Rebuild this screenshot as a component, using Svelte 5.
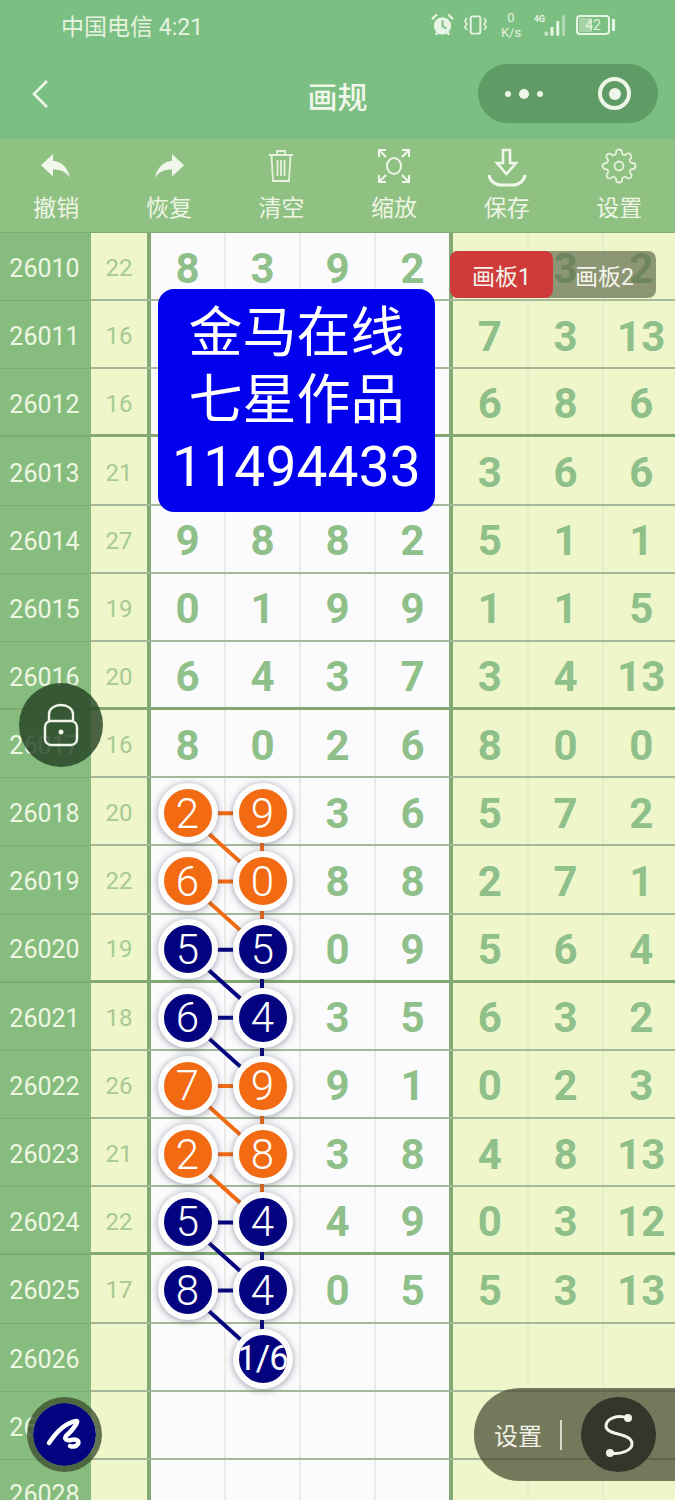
<script lang="ts">
	const ROW_H = 68.17;

	// id, sum, draw columns, right columns
	const rows = [
		["26010", "22", ["8", "3", "9", "2"], ["", "3", "2"]],
		["26011", "16", ["", "", "", ""], ["7", "3", "13"]],
		["26012", "16", ["", "", "", ""], ["6", "8", "6"]],
		["26013", "21", ["", "", "", ""], ["3", "6", "6"]],
		["26014", "27", ["9", "8", "8", "2"], ["5", "1", "1"]],
		["26015", "19", ["0", "1", "9", "9"], ["1", "1", "5"]],
		["26016", "20", ["6", "4", "3", "7"], ["3", "4", "13"]],
		["26017", "16", ["8", "0", "2", "6"], ["8", "0", "0"]],
		["26018", "20", ["2", "9", "3", "6"], ["5", "7", "2"]],
		["26019", "22", ["6", "0", "8", "8"], ["2", "7", "1"]],
		["26020", "19", ["5", "5", "0", "9"], ["5", "6", "4"]],
		["26021", "18", ["6", "4", "3", "5"], ["6", "3", "2"]],
		["26022", "26", ["7", "9", "9", "1"], ["0", "2", "3"]],
		["26023", "21", ["2", "8", "3", "8"], ["4", "8", "13"]],
		["26024", "22", ["5", "4", "4", "9"], ["0", "3", "12"]],
		["26025", "17", ["8", "4", "0", "5"], ["5", "3", "13"]],
		["26026", "", ["", "", "", ""], ["", "", ""]],
		["26027", "", ["", "", "", ""], ["", "", ""]],
		["26028", "", ["", "", "", ""], ["", "", ""]],
	];

	const tools = ["撤销", "恢复", "清空", "缩放", "保存", "设置"];

	const FIRST_BALL = 8;
	const LAST_BALL = 15;
	const ORANGE = "#f26a12";
	const NAVY = "#03037f";
	const LEFT_X = 186;
	const RIGHT_X = 262;

	const ballColors = {
		8: "orange", 9: "orange", 10: "navy", 11: "navy",
		12: "orange", 13: "orange", 14: "navy", 15: "navy",
	};

	function ballClass(r: number, c: number) {
		if (r === 16 && c === 1) return "navy small";
		if (r >= FIRST_BALL && r <= LAST_BALL && c < 2) return ballColors[r];
		return "";
	}

	const segments = [];
	for (let r = FIRST_BALL; r <= LAST_BALL; r++) {
		const y = ROW_H * r + 35;
		const stroke = ballColors[r] === "orange" ? ORANGE : NAVY;
		segments.push({ x1: LEFT_X, y1: y, x2: RIGHT_X, y2: y, stroke });
		segments.push({ x1: LEFT_X, y1: y, x2: RIGHT_X, y2: y + ROW_H, stroke });
		segments.push({ x1: RIGHT_X, y1: y, x2: RIGHT_X, y2: y + ROW_H, stroke });
	}
</script>

<div class="page">
	<header class="top">
		<div class="status">
			<span class="carrier">中国电信 4:21</span>
			<div class="status-icons">
				<svg width="23" height="26" viewBox="0 0 24 26">
					<circle cx="12" cy="14" r="9" fill="#e9f5e4" />
					<path d="M12 8v6l4 3" fill="none" stroke="#7bbf82" stroke-width="2" />
					<path d="M1 7l5-5M23 7l-5-5M5 23l2-2M19 23l-2-2" stroke="#e9f5e4" stroke-width="2.4" />
				</svg>
				<svg width="25" height="24" viewBox="0 0 26 24">
					<rect x="8" y="3" width="10" height="18" rx="2" fill="none" stroke="#e9f5e4" stroke-width="2" />
					<path d="M4 5l-2 3 2 3-2 3 2 3M22 5l2 3-2 3 2 3-2 3" fill="none" stroke="#e9f5e4" stroke-width="1.6" />
				</svg>
				<div class="speed"><span>0</span><span>K/s</span></div>
				<svg width="33" height="26" viewBox="0 0 34 26">
					<text x="0" y="10" class="g4">4G</text>
					<rect x="11" y="20" width="3" height="4" fill="#d8ecd2" />
					<rect x="17" y="15" width="3" height="9" fill="#e9f5e4" />
					<rect x="23" y="9" width="3" height="15" fill="#e9f5e4" />
					<rect x="29" y="3" width="3" height="21" fill="#b4dab4" />
				</svg>
				<div class="battery">
					<div class="battery-box"><span class="level"></span><span class="pct">42</span></div>
					<span class="battery-tip"></span>
				</div>
			</div>
		</div>
		<div class="nav">
			<svg class="back" width="18" height="30" viewBox="0 0 18 30">
				<path d="M16 2L3 15l13 13" fill="none" stroke="#f0f7ea" stroke-width="2.6" />
			</svg>
			<h1>画规</h1>
			<div class="capsule">
				<span class="dots"><i></i><i class="big"></i><i></i></span>
				<span class="target"><i></i></span>
			</div>
		</div>
	</header>

	<div class="toolbar">
		{#each tools as label, i}
			<div class="tool">
				<div class="tool-icon">
					{#if i === 0}
						<svg width="36" height="36" viewBox="0 0 24 24"><path d="M10 8.500V4L2 11.500 10 19v-4.600c5.200 0 8.800 1.700 11.300 5.400C20.300 14.500 17 9.300 10 8.500z" fill="#f0f7ea" /></svg>
					{:else if i === 1}
						<svg width="36" height="36" viewBox="0 0 24 24"><path d="M14 8.500V4l8 7.500L14 19v-4.600c-5.200 0-8.800 1.700-11.300 5.400C3.700 14.500 7 9.300 14 8.500z" fill="#f0f7ea" /></svg>
					{:else if i === 2}
						<svg width="30" height="36" viewBox="0 0 30 36" fill="none" stroke="#e6f1dc" stroke-width="1.800">
							<path d="M3 7h24M11 7V3h8v4M5.500 7l1.500 26h16l1.500-26M11.500 12v16M15 12v16M18.500 12v16" />
						</svg>
					{:else if i === 3}
						<svg width="34" height="36" viewBox="0 0 34 36" fill="none" stroke="#f0f7ea" stroke-width="2">
							<ellipse cx="17" cy="18" rx="7" ry="8" />
							<path d="M2 9V2h7M3 3l6 6M32 9V2h-7M31 3l-6 6M2 27v7h7M3 33l6-6M32 27v7h-7M31 33l-6-6" />
						</svg>
					{:else if i === 4}
						<svg width="40" height="40" viewBox="0 0 40 40" fill="none" stroke="#f0f7ea" stroke-width="2.600">
							<path d="M16 2h7v13h6L19.500 26 10 15h6z" />
							<path d="M2 27c1 6 6 10 12 10h12c6 0 11-4 12-10" stroke-width="3" />
						</svg>
					{:else}
						<svg width="36" height="36" viewBox="0 0 24 24" fill="none" stroke="#e6f1dc" stroke-width="1.200">
							<path d="M12 15a3 3 0 1 0 0-6 3 3 0 0 0 0 6z" />
							<path d="M19.400 15a1.650 1.650 0 0 0 .33 1.820l.06.06a2 2 0 0 1 0 2.830 2 2 0 0 1-2.830 0l-.06-.06a1.650 1.650 0 0 0-1.820-.33 1.650 1.650 0 0 0-1 1.510V21a2 2 0 0 1-2 2 2 2 0 0 1-2-2v-.09A1.650 1.650 0 0 0 9 19.400a1.650 1.650 0 0 0-1.820.33l-.06.06a2 2 0 0 1-2.830 0 2 2 0 0 1 0-2.830l.06-.06a1.650 1.650 0 0 0 .33-1.820 1.650 1.650 0 0 0-1.510-1H3a2 2 0 0 1-2-2 2 2 0 0 1 2-2h.09A1.650 1.650 0 0 0 4.600 9a1.650 1.650 0 0 0-.33-1.820l-.06-.06a2 2 0 0 1 0-2.830 2 2 0 0 1 2.830 0l.06.06a1.650 1.650 0 0 0 1.820.33H9a1.650 1.650 0 0 0 1-1.510V3a2 2 0 0 1 2-2 2 2 0 0 1 2 2v.09a1.650 1.650 0 0 0 1 1.510 1.650 1.650 0 0 0 1.820-.33l.06-.06a2 2 0 0 1 2.830 0 2 2 0 0 1 0 2.830l-.06.06a1.650 1.650 0 0 0-.33 1.820V9a1.650 1.650 0 0 0 1.510 1H21a2 2 0 0 1 2 2 2 2 0 0 1-2 2h-.09a1.650 1.650 0 0 0-1.510 1z" />
						</svg>
					{/if}
				</div>
				<span>{label}</span>
			</div>
		{/each}
	</div>

	<main class="sheet">
		{#each rows as [id, sum, draw, right], r}
			<div class="row" class:thick={r % 4 === 2}>
				<div class="id">{id}</div>
				<div class="sum">{sum}</div>
				<div class="draw">
					{#each draw as value, c}
						<div class="cell">
							{#if ballClass(r, c)}
								<span class="ball {ballClass(r, c)}">{value || "1/6"}</span>
							{:else}
								{value}
							{/if}
						</div>
					{/each}
				</div>
				<div class="right">
					{#each right as value}
						<div class="cell">{value}</div>
					{/each}
				</div>
			</div>
		{/each}

		<svg class="links" width="675" height="1300">
			{#each segments as s}
				<line x1={s.x1} y1={s.y1} x2={s.x2} y2={s.y2} stroke={s.stroke} stroke-width="4" />
			{/each}
		</svg>

		<div class="promo">
			<div>金马在线</div>
			<div>七星作品</div>
			<div class="promo-num">11494433</div>
		</div>

		<div class="tabs">
			<span class="tab active">画板1</span>
			<span class="tab">画板2</span>
		</div>

		<button class="lock" aria-label="锁定">
			<svg width="36" height="44" viewBox="0 0 36 44" fill="none" stroke="#f0f4ea" stroke-width="2.400">
				<path d="M6 18v-7a12 9 0 0 1 24 0v7" />
				<rect x="2" y="18" width="32" height="24" rx="6" />
				<circle cx="18" cy="29" r="2.500" fill="#f0f4ea" stroke="none" />
			</svg>
		</button>

		<button class="pen" aria-label="画笔">
			<svg width="40" height="34" viewBox="0 0 40 34" fill="none" stroke="#fff" stroke-width="4.500" stroke-linecap="round" stroke-linejoin="round">
				<path d="M4 25C10 16 20 5 31 3c4-1-3 9-10 15-2 3 1 5 5 4 4-1 9 0 7 4-2 3-6 3-8 2" />
			</svg>
		</button>

		<div class="settings">
			<span class="settings-label">设置</span>
			<span class="divider"></span>
			<span class="s-btn">
				<svg width="40" height="50" viewBox="0 0 40 50" fill="none" stroke="#f2f2ea" stroke-width="3">
					<path d="M29 8C18 4 7 9 7 16c0 10 26 6 26 18 0 7-13 11-22 9" />
					<circle cx="29" cy="8" r="4" fill="#f2f2ea" stroke="none" />
					<circle cx="11" cy="43" r="4" fill="#f2f2ea" stroke="none" />
				</svg>
			</span>
		</div>
	</main>
</div>

<style>
	:global(body) {
		margin: 0;
	}

	.page {
		width: 675px;
		height: 1500px;
		overflow: hidden;
		display: flex;
		flex-direction: column;
		font-family: Roboto, "Noto Sans CJK SC", sans-serif;
	}

	.top {
		background: #7bbf82;
		height: 139px;
		flex: none;
	}

	.status {
		height: 50px;
		display: flex;
		align-items: center;
		justify-content: space-between;
		padding: 0 60px 0 61px;
		color: #e6f3df;
		font-size: 23px;
	}

	.status-icons {
		display: flex;
		align-items: center;
		gap: 9px;
	}

	.speed {
		display: flex;
		flex-direction: column;
		align-items: center;
		font-size: 13px;
		line-height: 15px;
		width: 24px;
		margin: 0 2px;
	}

	.g4 {
		font-size: 9px;
		font-weight: 700;
		fill: #e9f5e4;
	}

	.battery {
		display: flex;
		align-items: center;
		gap: 2px;
	}

	.battery-box {
		position: relative;
		width: 34px;
		height: 20px;
		border: 2px solid #e9f5e4;
		border-radius: 4px;
		box-sizing: border-box;
		font-size: 14px;
		display: flex;
		align-items: center;
		justify-content: center;
	}

	.level {
		position: absolute;
		left: 1px;
		top: 1px;
		bottom: 1px;
		width: 42%;
		background: #a8d3a8;
	}

	.pct {
		position: relative;
	}

	.battery-tip {
		width: 3px;
		height: 12px;
		background: #e9f5e4;
	}

	.nav {
		height: 89px;
		display: flex;
		align-items: center;
		position: relative;
		padding-left: 31px;
	}

	.back {
		margin-top: -1px;
	}

	h1 {
		position: absolute;
		left: 0;
		right: 0;
		margin: 0;
		text-align: center;
		font-size: 30px;
		font-weight: 500;
		color: #f0f7ea;
	}

	.capsule {
		position: absolute;
		left: 478px;
		top: 14px;
		width: 180px;
		height: 59px;
		border-radius: 30px;
		background: #5e9b65;
		display: flex;
		align-items: center;
		justify-content: space-between;
		padding: 0 27px 0 27px;
		box-sizing: border-box;
	}

	.dots {
		display: flex;
		align-items: center;
		gap: 8px;
	}

	.dots i {
		width: 6px;
		height: 6px;
		border-radius: 50%;
		background: #eef6e8;
	}

	.dots i.big {
		width: 10px;
		height: 10px;
	}

	.target {
		width: 33px;
		height: 33px;
		border: 4px solid #eef6e8;
		border-radius: 50%;
		box-sizing: border-box;
		display: flex;
		align-items: center;
		justify-content: center;
	}

	.target i {
		width: 12px;
		height: 12px;
		border-radius: 50%;
		background: #eef6e8;
	}

	.toolbar {
		height: 94px;
		flex: none;
		background: #8fc183;
		display: grid;
		grid-template-columns: repeat(6, 112.6px);
		justify-content: start;
		box-sizing: border-box;
		border-bottom: 1px solid #7eab70;
	}

	.tool {
		display: flex;
		flex-direction: column;
		align-items: center;
		color: #eef5e4;
		font-size: 23px;
		line-height: 30px;
	}

	.tool-icon {
		height: 55px;
		padding-top: 9px;
		box-sizing: border-box;
		display: flex;
		align-items: flex-start;
		justify-content: center;
	}

	.sheet {
		position: relative;
		flex: none;
	}

	.row {
		height: 68.17px;
		box-sizing: border-box;
		display: flex;
		border-bottom: 2px solid #a7b89a;
	}

	.row.thick {
		border-bottom: 3px solid #84a872;
	}

	.id {
		width: 91px;
		background: #87bc7f;
		color: #eef7e2;
		font-size: 25px;
		display: flex;
		align-items: center;
		justify-content: center;
		flex: none;
		box-sizing: border-box;
		padding: 4px 2px 0 0;
		margin-bottom: -2px;
		border-bottom: 1px solid #79ab6f;
	}

	.sum {
		width: 60px;
		box-sizing: border-box;
		background: #eef6ca;
		border-right: 4px solid #83aa74;
		color: #a9c994;
		font-size: 24px;
		display: flex;
		align-items: center;
		justify-content: center;
		flex: none;
		padding-top: 4px;
	}

	.draw,
	.right {
		display: flex;
		flex: none;
	}

	.draw {
		width: 298px;
		background: #fbfbfd;
	}

	.right {
		width: 229px;
		box-sizing: border-box;
		background: #eef6ca;
		border-left: 4px solid #83aa74;
	}

	.cell {
		flex: 1;
		min-width: 0;
		display: flex;
		align-items: center;
		justify-content: center;
		font-size: 42px;
		font-weight: 700;
		color: #8fc08a;
		border-right: 2px solid #ebebe6;
		box-sizing: border-box;
		padding-top: 4px;
	}

	.right .cell {
		border-right-color: #e6edcf;
	}

	.cell:last-child {
		border-right: none;
	}

	.ball {
		position: relative;
		z-index: 2;
		flex: none;
		width: 60px;
		height: 60px;
		box-sizing: border-box;
		border: 6px solid #fdfdfd;
		border-radius: 50%;
		display: flex;
		align-items: center;
		justify-content: center;
		color: #fff;
		font-size: 42px;
		font-weight: 300;
		box-shadow: 0 1px 7px rgba(70, 70, 90, 0.55);
	}

	.ball.orange {
		background: #f26a12;
	}

	.ball.navy {
		background: #03037f;
	}

	.ball.small {
		font-size: 35px;
		font-weight: 400;
		letter-spacing: -1px;
		white-space: nowrap;
		overflow: hidden;
	}

	.links {
		position: absolute;
		left: 0;
		top: 0;
		z-index: 1;
		pointer-events: none;
	}

	.promo {
		position: absolute;
		z-index: 3;
		left: 158px;
		top: 56px;
		width: 277px;
		height: 223px;
		box-sizing: border-box;
		padding-top: 12px;
		background: #0000ee;
		border-radius: 16px;
		color: #fff;
		font-size: 54px;
		line-height: 66.500px;
		text-align: center;
	}

	.promo-num {
		font-size: 55px;
		letter-spacing: 0.2px;
	}

	.tabs {
		position: absolute;
		z-index: 3;
		left: 450px;
		top: 18px;
		width: 206px;
		height: 47px;
		display: flex;
		border-radius: 8px;
		background: rgba(95, 105, 75, 0.68);
	}

	.tab {
		width: 103px;
		display: flex;
		align-items: center;
		justify-content: center;
		color: #f5f5ec;
		font-size: 23px;
		border-radius: 8px;
	}

	.tab.active {
		background: #cf3a3a;
	}

	button {
		padding: 0;
		margin: 0;
		display: flex;
		align-items: center;
		justify-content: center;
	}

	.lock {
		position: absolute;
		z-index: 4;
		left: 19px;
		top: 450px;
		width: 84px;
		height: 84px;
		border: none;
		border-radius: 50%;
		background: rgba(38, 66, 36, 0.82);
	}

	.pen {
		position: absolute;
		z-index: 4;
		left: 27px;
		top: 1164px;
		width: 75px;
		height: 75px;
		box-sizing: border-box;
		border: 6px solid rgba(62, 82, 50, 0.8);
		border-radius: 50%;
		background: #03037f;
		background-clip: padding-box;
	}

	.settings {
		position: absolute;
		z-index: 4;
		left: 474px;
		top: 1155px;
		width: 201px;
		height: 93px;
		box-sizing: border-box;
		padding-left: 20px;
		border-radius: 46px 0 0 46px;
		background: rgba(70, 72, 50, 0.72);
		display: flex;
		align-items: center;
		color: #f0f0e6;
		font-size: 24px;
	}

	.divider {
		width: 2px;
		height: 30px;
		margin-left: 18px;
		background: #d9dacb;
	}

	.s-btn {
		width: 75px;
		height: 75px;
		margin-left: 19px;
		border-radius: 50%;
		background: #33362a;
		display: flex;
		align-items: center;
		justify-content: center;
	}
</style>
